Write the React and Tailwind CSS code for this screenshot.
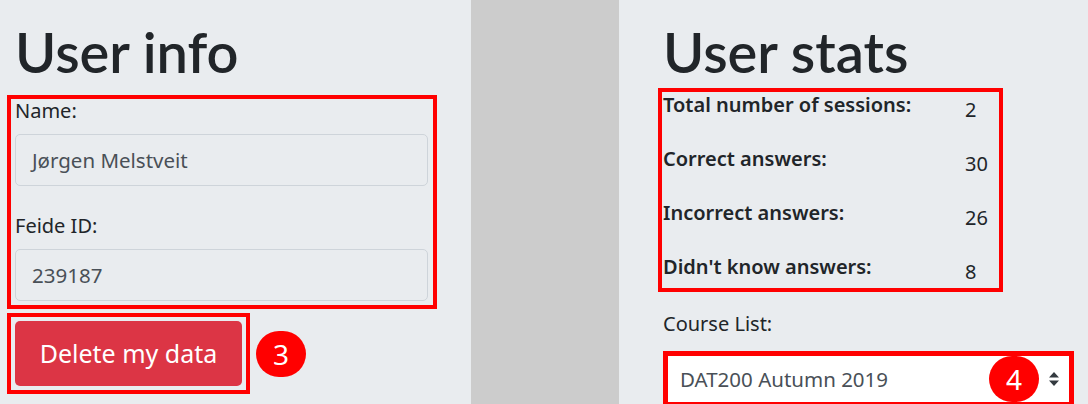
import React from 'react';

const STATS = [
  { label: 'Total number of sessions:', value: '2' },
  { label: 'Correct answers:', value: '30' },
  { label: 'Incorrect answers:', value: '26' },
  { label: "Didn't know answers:", value: '8' },
];

function Badge({ n }) {
  return (
    <div className="flex h-[46px] w-[50px] items-center justify-center rounded-full bg-[#ff0000] text-[28px] leading-none text-white">
      {n}
    </div>
  );
}

function Field({ label, value, className = '' }) {
  return (
    <div className={className}>
      <label className="block text-[20px] leading-[24px] text-[#212529]">{label}</label>
      <div className="mt-[11px] flex h-[52px] w-[413px] items-center rounded-[5px] border border-[#ced4da] bg-[#e9ecef] px-[16px] text-[20.5px] text-[#495057]">
        {value}
      </div>
    </div>
  );
}

const heading = { fontFamily: 'Lato, "Noto Sans", sans-serif' };

export default function App() {
  return (
    <div
      className="flex h-[404px] w-[1088px] overflow-hidden bg-[#e9ecef] text-[#212529]"
      style={{ fontFamily: '"Noto Sans", "Open Sans", sans-serif' }}
    >
      {/* User info */}
      <div className="w-[471px] shrink-0">
        <h1 style={heading} className="ml-[15px] mt-[18px] text-[56px] font-semibold leading-[68px]">User info</h1>
        <div className="ml-[7px] mt-[9px] w-[430px] border-4 border-[#ff0000] pb-[4px] pl-[4px] pt-0">
          <Field label="Name:" value="Jørgen Melstveit" />
          <Field label="Feide ID:" value="239187" className="mt-[28px]" />
        </div>
        <div className="ml-[7px] mt-[4px] flex items-center gap-[6px]">
          <div className="border-4 border-[#ff0000] p-[4px]">
            <button className="flex h-[65px] w-[227px] items-center justify-center rounded-[5px] bg-[#dc3545] text-[25px] text-white">
              Delete my data
            </button>
          </div>
          <Badge n="3" />
        </div>
      </div>

      {/* divider */}
      <div className="w-[148px] shrink-0 bg-[#cccccc]" />

      {/* User stats */}
      <div className="flex-1">
        <h1 style={heading} className="ml-[44px] mt-[18px] text-[56px] font-semibold leading-[68px]">User stats</h1>
        <div className="ml-[39px] mt-[2px] flex w-[345px] flex-col gap-[20px] border-4 border-[#ff0000] pl-[1px]">
          {STATS.map((s) => (
            <div key={s.label} className="grid h-[34px] grid-cols-[302px_1fr] items-start">
              <span className="pt-[1px] text-[20px] font-semibold leading-[24px]">{s.label}</span>
              <span className="pt-[6px] text-[20px] leading-[24px]">{s.value}</span>
            </div>
          ))}
        </div>
        <div className="ml-[44px] mt-[20px] text-[20px] leading-[24px]">Course List:</div>
        <div className="ml-[44px] mt-[15px] flex h-[56px] w-[411px] items-center border-[5px] border-[#ff0000] bg-white pl-[12px] text-[20.5px] text-[#495057]">
          DAT200 Autumn 2019
          <div className="ml-auto mr-[10px] flex items-center gap-[10px]">
            <Badge n="4" />
            <svg width="10" height="14" viewBox="0 0 10 14">
              <path d="M5 0 L10 5.5 L0 5.5 Z M5 14 L10 8.5 L0 8.5 Z" fill="#343a40" />
            </svg>
          </div>
        </div>
      </div>
    </div>
  );
}
